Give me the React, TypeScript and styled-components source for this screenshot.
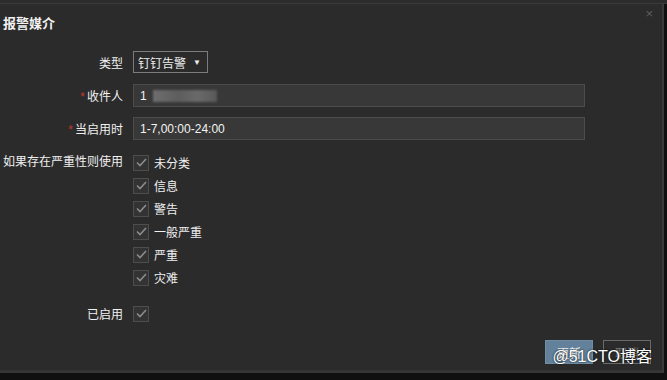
import React from "react";
import styled, { createGlobalStyle } from "styled-components";

const GlobalStyle = createGlobalStyle`
  html, body {
    margin: 0;
    padding: 0;
    background: #101010;
  }
  body {
    font-family: "Liberation Sans", "Noto Sans CJK SC", sans-serif;
    font-size: 12px;
    color: #f0f0f0;
  }
`;

const severities = ["未分类", "信息", "警告", "一般严重", "严重", "灾难"];

const Check = () => (
  <svg width="11" height="9" viewBox="0 0 11 9">
    <path d="M1 4.5 L4 7.5 L10 1" fill="none" stroke="#8c8c8c" strokeWidth="1.6" />
  </svg>
);

const App = () => {
  return (
    <>
      <GlobalStyle />
      <Screen>
        <TopStrip />
        <Dialog>
          <Header>
            <Title>报警媒介</Title>
            <Close>×</Close>
          </Header>
          <Form>
            <Row>
              <Label>类型</Label>
              <Select>
                钉钉告警 <Arrow>▼</Arrow>
              </Select>
            </Row>
            <Row>
              <Label>
                <Star>*</Star>收件人
              </Label>
              <Input>
                1<Blurred />
              </Input>
            </Row>
            <Row>
              <Label>
                <Star>*</Star>当启用时
              </Label>
              <Input>1-7,00:00-24:00</Input>
            </Row>
            <SeverityRow>
              <Label>如果存在严重性则使用</Label>
              <CheckList>
                {severities.map((s) => (
                  <CheckItem key={s}>
                    <Box>
                      <Check />
                    </Box>
                    {s}
                  </CheckItem>
                ))}
              </CheckList>
            </SeverityRow>
            <EnabledRow>
              <Label>已启用</Label>
              <Box>
                <Check />
              </Box>
            </EnabledRow>
          </Form>
          <Footer>
            <Button primary>更新</Button>
            <Button>取消</Button>
            <Watermark>@51CTO博客</Watermark>
          </Footer>
        </Dialog>
      </Screen>
    </>
  );
};

export default App;

const Screen = styled.div`
  width: 667px;
  height: 380px;
  overflow: hidden;
  display: flex;
  flex-direction: column;
`;

const TopStrip = styled.div`
  height: 3px;
  background: #2c2c2c;
  border-bottom: 1px solid #3a3a3a;
`;

const Dialog = styled.div`
  width: 662px;
  height: 368px;
  background: #2b2b2b;
  border-right: 2px solid #3a3a3a;
  border-bottom: 1px solid #383838;
  display: flex;
  flex-direction: column;
`;

const Header = styled.div`
  display: flex;
  align-items: center;
  justify-content: space-between;
  height: 36px;
  padding: 0 9px 0 3px;
`;

const Title = styled.div`
  font-size: 13px;
  font-weight: bold;
  color: #f2f2f2;
`;

const Close = styled.div`
  font-size: 13px;
  color: #5e5e5e;
  margin-top: -18px;
`;

const Form = styled.div`
  display: flex;
  flex-direction: column;
  padding-top: 11px;
`;

const Row = styled.div`
  display: grid;
  grid-template-columns: 123px 452px;
  column-gap: 10px;
  align-items: center;
  height: 22px;
  margin-bottom: 11px;
`;

const Label = styled.div`
  text-align: right;
  font-size: 12px;
  color: #f0f0f0;
  white-space: nowrap;
`;

const Star = styled.span`
  color: #c0392b;
  margin-right: 2px;
`;

const Select = styled.div`
  justify-self: start;
  box-sizing: border-box;
  width: 75px;
  height: 22px;
  border: 1px solid #7c7c7c;
  display: flex;
  align-items: center;
  padding: 0 5px 0 4px;
  font-size: 12px;
  gap: 7px;
`;

const Arrow = styled.span`
  font-size: 8px;
`;

const Input = styled.div`
  box-sizing: border-box;
  height: 23px;
  background: #383838;
  border: 1px solid #4c4c4c;
  display: flex;
  align-items: center;
  padding: 0 6px;
  font-size: 12px;
  color: #f2f2f2;
`;

const Blurred = styled.span`
  display: inline-block;
  width: 64px;
  height: 12px;
  margin-left: 6px;
  background: linear-gradient(90deg, #6e6e6e, #5d5d5d 40%, #6a6a6a 70%, #585858);
  filter: blur(1px);
`;

const SeverityRow = styled.div`
  display: grid;
  grid-template-columns: 123px auto;
  column-gap: 10px;
  margin-top: 4px;
  align-items: start;

  ${Label} {
    line-height: 17px;
  }
`;

const CheckList = styled.div`
  display: flex;
  flex-direction: column;
  gap: 6px;
`;

const CheckItem = styled.div`
  display: flex;
  align-items: center;
  gap: 5px;
  height: 17px;
  font-size: 12px;
`;

const Box = styled.div`
  box-sizing: border-box;
  width: 16px;
  height: 16px;
  border: 1px solid #4d4d4d;
  background: #333333;
  display: flex;
  align-items: center;
  justify-content: center;
`;

const EnabledRow = styled.div`
  display: grid;
  grid-template-columns: 123px auto;
  column-gap: 10px;
  align-items: center;
  justify-items: start;
  margin-top: 19px;

  ${Label} {
    justify-self: end;
  }
`;

const Footer = styled.div`
  position: relative;
  margin-top: auto;
  display: flex;
  justify-content: flex-end;
  gap: 10px;
  padding: 0 11px 6px 0;
  border-bottom: 2px solid #353535;
`;

const Button = styled.div<{ primary?: boolean }>`
  box-sizing: border-box;
  width: 48px;
  height: 24px;
  display: flex;
  align-items: center;
  justify-content: center;
  font-size: 12px;
  color: ${(p) => (p.primary ? "#f2f2f2" : "#777")};
  background: ${(p) => (p.primary ? "#63819a" : "#2b2b2b")};
  border: 1px solid ${(p) => (p.primary ? "#6f8da5" : "#6a6a6a")};
`;

const Watermark = styled.div`
  position: absolute;
  right: 10px;
  bottom: 3px;
  font-size: 16px;
  color: #ffffff;
  text-shadow: 0 0 2px #000;
`;
